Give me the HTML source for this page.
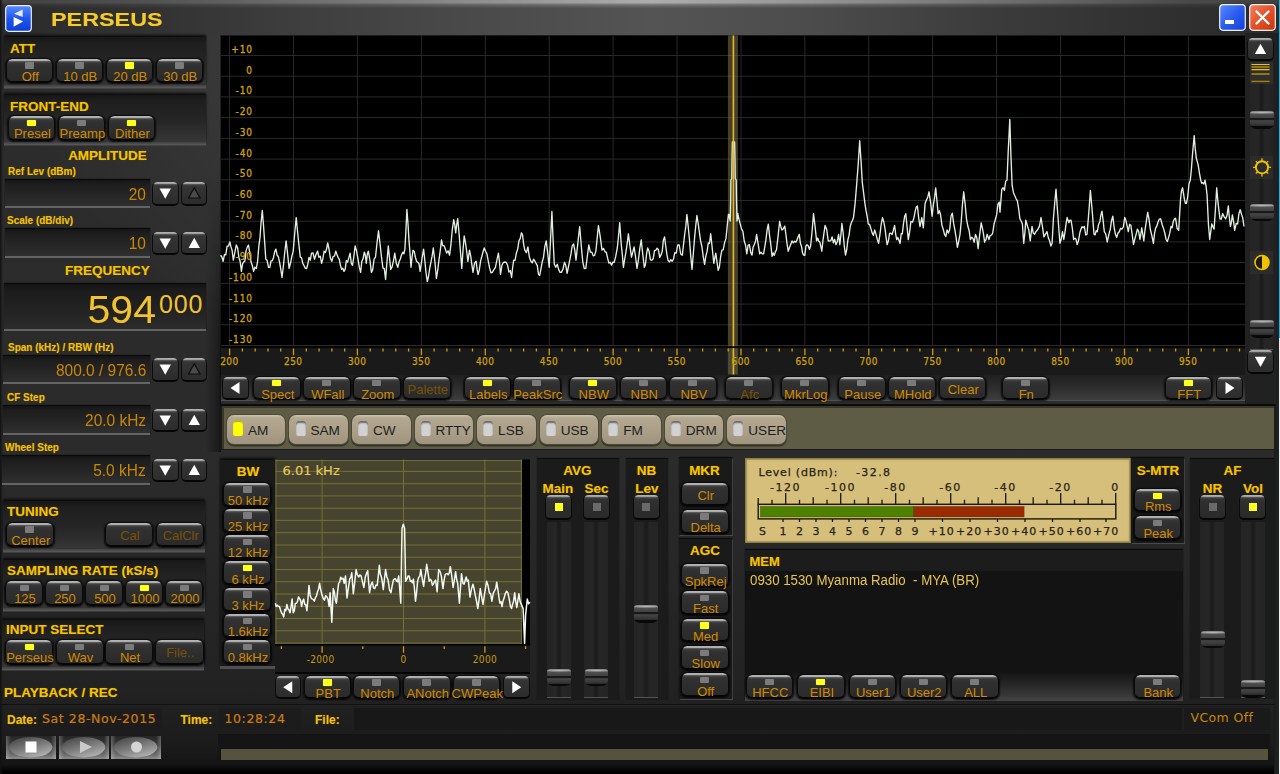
<!DOCTYPE html><html><head><meta charset="utf-8"><title>PERSEUS</title><style>
*{box-sizing:border-box;margin:0;padding:0}
html,body{width:1280px;height:774px;overflow:hidden;background:#1d1d1d}
body{position:relative;font-family:"Liberation Sans",sans-serif;color:#d08a00}
div,span,svg{position:absolute}
.win{left:0;top:0;width:1280px;height:774px;background:
 radial-gradient(ellipse 660px 430px at 655px 0,rgba(255,255,255,.2) 0,rgba(255,255,255,.09) 50%,rgba(255,255,255,.045) 75%,rgba(255,255,255,0) 100%),
 linear-gradient(180deg,#2c2c2c 0,#2b2b2b 450px,#222 690px,#1c1c1c 740px,#151515 764px,#000 772px)}
.tb{left:0;top:0;width:1280px;height:35px;background:linear-gradient(90deg,#2b2b2b 0,#313131 11%,#3e3e3e 23%,#4a4a4a 37%,#545454 51%,#4c4c4c 63%,#3b3b3b 78%,#2f2f2f 92%,#2a2a2a 100%)}
.tb2{left:0;top:0;width:1280px;height:9px;background:linear-gradient(90deg,rgba(255,255,255,.1) 0,rgba(255,255,255,.16) 12%,rgba(255,255,255,.3) 30%,rgba(255,255,255,.52) 51%,rgba(255,255,255,.3) 75%,rgba(255,255,255,.14) 92%,rgba(255,255,255,.1) 100%);-webkit-mask-image:linear-gradient(180deg,#000 0,#000 2.5px,rgba(0,0,0,.35) 5px,transparent 8.5px);mask-image:linear-gradient(180deg,#000 0,#000 2.5px,rgba(0,0,0,.35) 5px,transparent 8.5px)}
.pn{background:linear-gradient(180deg,#171717 0,#1e1e1e 6px,#272727 60%,#363636 100%);box-shadow:0 -2px 2px #0c0c0c,0 1.5px 0 #454545,0 3.5px 0 #555}
.pd{background:#1b1b1b;box-shadow:0 -1px 1px #0e0e0e}
.h{font-weight:bold;font-size:13.5px;color:#f5c400;white-space:nowrap;line-height:14px;text-shadow:0 0 1px #7a5a00}
.s{font-weight:bold;font-size:10px;color:#f2c20a;white-space:nowrap;line-height:12px;text-shadow:0 0 1px #7a5a00}
.b{height:24px;border-radius:6px;background:linear-gradient(180deg,#8a8a8a 0,#cdcdcd .8px,#a8a8a8 1.6px,#505050 2.6px,#363636 4px,#303030 7px,#2e2e2e 60%,#2a2a2a 100%);border:1px solid #0a0a0a;border-top:0;border-bottom:2.5px solid #060606;box-shadow:0 0 1.5px .6px rgba(0,0,0,.75);text-align:center;font-size:13px;line-height:13px;color:#d08a00;white-space:nowrap}
.b i{position:absolute;left:50%;margin-left:-4.5px;top:3.5px;width:9px;height:6.5px;background:#7b7b7b;border-radius:1px}
.b i.on{background:#ffff1e;box-shadow:0 0 1px #aa0}
.b span{left:-5px;right:-7px;top:11.2px;text-align:center}
.b.nl span{top:6px}
.b.dim{color:#7a5206}
.b.tbb i{top:2.6px}
.b.tbb span{top:10.9px}
.b.tbb.nl span{top:5.5px}
.ar{height:24px;border-radius:5px;background:linear-gradient(180deg,#8a8a8a 0,#c4c4c4 .8px,#9a9a9a 1.6px,#4a4a4a 2.6px,#353535 4px,#2c2c2c 100%);border:1px solid #0a0a0a;border-top:0;border-bottom:2.5px solid #060606}
.vb{background:linear-gradient(180deg,#141414 0,#1d1d1d 4px,#262626 60%,#2f2f2f 100%);box-shadow:0 -1px 1px #0a0a0a;border-bottom:2px solid #646464;font-size:17px;line-height:30.6px;color:#c8860a;white-space:nowrap}
.vb span{right:4px;top:0;transform-origin:100% 50%;transform:scaleX(.91)}
.tk{background:linear-gradient(90deg,#242424 0,#262626 36%,#1c1c1c 47%,#1c1c1c 53%,#262626 64%,#242424 100%);box-shadow:0 1px 0 #555}
.hd{height:17.5px;border-radius:3px 3px 6px 6px;background:radial-gradient(ellipse 60% 2px at 50% 1.6px,rgba(255,255,255,.35),rgba(255,255,255,0)),linear-gradient(180deg,#707070 0,#929292 1.6px,#505050 2.8px,#424242 6.5px,#191919 7.2px,#191919 9px,#464646 9.6px,#323232 14.3px,#090909 15.5px,#090909 17.5px)}
.tg{width:27px;height:24.5px;border-radius:5px;background:linear-gradient(180deg,#8a8a8a 0,#c4c4c4 .8px,#9a9a9a 1.6px,#4a4a4a 2.6px,#343434 4px,#2f2f2f 7px,#2a2a2a 100%);border:1px solid #0a0a0a;border-top:0;border-bottom:2.5px solid #060606}
.tg i{position:absolute;left:8.5px;top:8px;width:8px;height:8px;background:#6a6a6a}
.tg i.on{background:#ffff1e}
.mb{width:58.6px;height:28.6px;border-radius:7px;background:linear-gradient(180deg,#cdc3ad 0,#b3a78f 3px,#aa9e87 60%,#9f947f 100%);box-shadow:0 0 0 1px #4b4937,0 1.5px 0 1px #37352a;color:#1e1e1e;font-size:13.6px;line-height:14px}
.mb i{position:absolute;left:6.2px;top:6.2px;width:10px;height:14.6px;border-radius:3px 3px 2px 2px;background:#d2d2d2;box-shadow:inset 0 2px 1.5px #6a6a6a}
.mb i.on{background:#ffff00;box-shadow:inset 0 1px 1px #b4a800}
.mb span{left:21px;top:8.6px;white-space:nowrap}
.vd{font-family:"DejaVu Sans","Liberation Sans",sans-serif}
</style></head><body><div class="win"><div class="tb"></div><div class="tb2"></div>
<svg style="left:5px;top:5px" width="27" height="27" viewBox="0 0 27 27"><defs><linearGradient id="lg1" x1="0" y1="0" x2="0" y2="1"><stop offset="0" stop-color="#5a8cff"/><stop offset=".5" stop-color="#1f55ee"/><stop offset="1" stop-color="#0d3fd6"/></linearGradient></defs><rect x=".7" y=".7" width="25.6" height="25.6" rx="3" fill="url(#lg1)" stroke="#e8eefc" stroke-width="1.2"/><polygon points="17.7,4.6 17.7,12 9,8.7" fill="#e4ecff"/><polygon points="8.6,12 8.6,21.8 18.1,16.5" fill="#fff"/></svg>
<div style="left:51px;top:10.3px;font-weight:bold;font-size:17.5px;line-height:20px;color:#f4cb30;transform-origin:0 50%;transform:scaleX(1.335);white-space:nowrap;text-shadow:0 0 1px #6a5000">PERSEUS</div>
<svg style="left:1219px;top:4px" width="27" height="27" viewBox="0 0 27 27"><defs><linearGradient id="lg2" x1="0" y1="0" x2="1" y2="1"><stop offset="0" stop-color="#5b8bff"/><stop offset=".5" stop-color="#2a5cf0"/><stop offset="1" stop-color="#1240d8"/></linearGradient></defs><rect x=".7" y=".7" width="25.6" height="25.6" rx="3.5" fill="url(#lg2)" stroke="#f0f4ff" stroke-width="1.2"/><rect x="6" y="16" width="9" height="4" fill="#fff"/></svg>
<svg style="left:1248.6px;top:4px" width="27" height="27" viewBox="0 0 27 27"><defs><linearGradient id="lg3" x1="0" y1="0" x2="1" y2="1"><stop offset="0" stop-color="#f08060"/><stop offset=".5" stop-color="#e2522a"/><stop offset="1" stop-color="#c8340c"/></linearGradient></defs><rect x=".7" y=".7" width="25.6" height="25.6" rx="3.5" fill="url(#lg3)" stroke="#f8f0f0" stroke-width="1.2"/><path d="M7.5 7.5 L19.5 19.5 M19.5 7.5 L7.5 19.5" stroke="#fff" stroke-width="2.4" stroke-linecap="round"/></svg>
<div style="left:1279px;top:0;width:1px;height:338px;background:#19b4e6"></div><div style="left:1279px;top:338px;width:1px;height:436px;background:#e6eef0"></div>
<div style="left:1274.3px;top:33px;width:4.7px;height:741px;background:linear-gradient(90deg,#1b1b1b,#222)"></div>
<div style="left:0;top:0;width:3px;height:774px;background:linear-gradient(90deg,#111,rgba(20,20,20,0))"></div>
<div class="pn" style="left:4px;top:37px;width:202px;height:48px"></div>
<div class="h" style="left:10px;top:41.5px;">ATT</div>
<div class="b" style="left:5.6px;top:58.5px;width:47.4px;height:24.5px"><i></i><span>Off</span></div>
<div class="b" style="left:55.6px;top:58.5px;width:47.4px;height:24.5px"><i></i><span>10 dB</span></div>
<div class="b" style="left:105.6px;top:58.5px;width:47.4px;height:24.5px"><i class="on"></i><span>20 dB</span></div>
<div class="b" style="left:155.6px;top:58.5px;width:47.4px;height:24.5px"><i></i><span>30 dB</span></div>
<div class="pn" style="left:4px;top:95px;width:202px;height:47px"></div>
<div class="h" style="left:10px;top:100px;">FRONT-END</div>
<div class="b" style="left:7.7px;top:116px;width:47.4px;height:24.5px"><i class="on"></i><span>Presel</span></div>
<div class="b" style="left:57.7px;top:116px;width:47.4px;height:24.5px"><i></i><span>Preamp</span></div>
<div class="b" style="left:107.7px;top:116px;width:47.4px;height:24.5px"><i class="on"></i><span>Dither</span></div>
<div class="h" style="left:7.5px;top:149px;width:200px;text-align:center;">AMPLITUDE</div>
<div class="s" style="left:8px;top:165.5px;">Ref Lev (dBm)</div>
<div class="vb" style="left:5px;top:179.5px;width:145px;height:28.5px"><span>20</span></div>
<div class="ar" style="left:152px;top:182.3px;width:26.5px;height:23.7px"><svg width="25.5" height="23.2" style="left:0;top:0"><polygon points="12.25,16.8 6.55,6.6 17.95,6.6" fill="#fff"/></svg></div>
<div class="ar" style="left:180.5px;top:182.3px;width:26.5px;height:23.7px"><svg width="25.5" height="23.2" style="left:0;top:0"><polygon points="12.25,5.8 6.55,16 17.95,16" fill="#4a4a4a" stroke="#0c0c0c" stroke-width="1.2"/></svg></div>
<div class="s" style="left:7px;top:215px;">Scale (dB/div)</div>
<div class="vb" style="left:5px;top:229px;width:145px;height:28.5px"><span>10</span></div>
<div class="ar" style="left:152px;top:231.8px;width:26.5px;height:23.7px"><svg width="25.5" height="23.2" style="left:0;top:0"><polygon points="12.25,16.8 6.55,6.6 17.95,6.6" fill="#fff"/></svg></div>
<div class="ar" style="left:180.5px;top:231.8px;width:26.5px;height:23.7px"><svg width="25.5" height="23.2" style="left:0;top:0"><polygon points="12.25,5.8 6.55,16 17.95,16" fill="#fff"/></svg></div>
<div class="h" style="left:7.5px;top:264px;width:200px;text-align:center;">FREQUENCY</div>
<div style="left:4px;top:284px;width:202px;height:47px;background:linear-gradient(180deg,#121212 0,#1b1b1b 5px,#232323 60%,#2c2c2c 100%);box-shadow:0 -1px 1px #0a0a0a;border-bottom:2px solid #646464"></div>
<div style="left:40px;top:287px;width:116px;text-align:right;font-size:39.5px;line-height:44px;color:#f2c230;white-space:nowrap;transform-origin:100% 50%;transform:scaleX(1.04)">594</div>
<div style="left:159px;top:290px;font-size:25px;line-height:28px;color:#f2c230;white-space:nowrap;letter-spacing:.9px">000</div>
<div class="s" style="left:8px;top:341.5px;">Span (kHz) / RBW (Hz)</div>
<div class="vb" style="left:3px;top:355.5px;width:147px;height:28.5px"><span>800.0 / 976.6</span></div>
<div class="ar" style="left:152px;top:358.3px;width:26.5px;height:23.7px"><svg width="25.5" height="23.2" style="left:0;top:0"><polygon points="12.25,16.8 6.55,6.6 17.95,6.6" fill="#fff"/></svg></div>
<div class="ar" style="left:180.5px;top:358.3px;width:26.5px;height:23.7px"><svg width="25.5" height="23.2" style="left:0;top:0"><polygon points="12.25,5.8 6.55,16 17.95,16" fill="#4a4a4a" stroke="#0c0c0c" stroke-width="1.2"/></svg></div>
<div class="s" style="left:7px;top:392px;">CF Step</div>
<div class="vb" style="left:3px;top:406px;width:147px;height:28.5px"><span>20.0 kHz</span></div>
<div class="ar" style="left:152px;top:408.8px;width:26.5px;height:23.7px"><svg width="25.5" height="23.2" style="left:0;top:0"><polygon points="12.25,16.8 6.55,6.6 17.95,6.6" fill="#fff"/></svg></div>
<div class="ar" style="left:180.5px;top:408.8px;width:26.5px;height:23.7px"><svg width="25.5" height="23.2" style="left:0;top:0"><polygon points="12.25,5.8 6.55,16 17.95,16" fill="#fff"/></svg></div>
<div class="s" style="left:5px;top:442px;">Wheel Step</div>
<div class="vb" style="left:2px;top:456px;width:148px;height:28.5px"><span>5.0 kHz</span></div>
<div class="ar" style="left:152px;top:458.8px;width:26.5px;height:23.7px"><svg width="25.5" height="23.2" style="left:0;top:0"><polygon points="12.25,16.8 6.55,6.6 17.95,6.6" fill="#fff"/></svg></div>
<div class="ar" style="left:180.5px;top:458.8px;width:26.5px;height:23.7px"><svg width="25.5" height="23.2" style="left:0;top:0"><polygon points="12.25,5.8 6.55,16 17.95,16" fill="#fff"/></svg></div>
<div class="pn" style="left:3px;top:501px;width:202px;height:48px"></div>
<div class="h" style="left:7px;top:505px;">TUNING</div>
<div class="b" style="left:6px;top:522.5px;width:47.5px;height:24.5px"><i></i><span>Center</span></div>
<div class="b nl dim" style="left:105px;top:522.5px;width:48px;height:24.5px"><span>Cal</span></div>
<div class="b nl dim" style="left:155.5px;top:522.5px;width:48.5px;height:24.5px"><span>CalClr</span></div>
<div class="pn" style="left:3px;top:560px;width:202px;height:48px"></div>
<div class="h" style="left:7px;top:564px;">SAMPLING RATE (kS/s)</div>
<div class="b" style="left:5px;top:581px;width:38px;height:24.5px"><i></i><span>125</span></div>
<div class="b" style="left:45px;top:581px;width:38px;height:24.5px"><i></i><span>250</span></div>
<div class="b" style="left:85px;top:581px;width:38px;height:24.5px"><i></i><span>500</span></div>
<div class="b" style="left:125px;top:581px;width:38px;height:24.5px"><i class="on"></i><span>1000</span></div>
<div class="b" style="left:165px;top:581px;width:38px;height:24.5px"><i></i><span>2000</span></div>
<div class="pn" style="left:2px;top:620px;width:202px;height:47px"></div>
<div class="h" style="left:6px;top:623px;">INPUT SELECT</div>
<div class="b" style="left:5px;top:640px;width:48px;height:24.5px"><i class="on"></i><span>Perseus</span></div>
<div class="b" style="left:55.5px;top:640px;width:48px;height:24.5px"><i></i><span>Wav</span></div>
<div class="b" style="left:105px;top:640px;width:48px;height:24.5px"><i></i><span>Net</span></div>
<div class="b nl dim" style="left:155px;top:640px;width:48.5px;height:24.5px"><span>File..</span></div>
<div class="h" style="left:4px;top:686px;">PLAYBACK / REC</div>
<div style="left:0;top:704px;width:1275px;height:1px;background:#111"></div>
<div class="s" style="left:7px;top:713.5px;font-size:12px">Date:</div>
<div style="left:38px;top:708px;width:124px;height:22px;background:#1c1c1c"></div>
<div class="vd" style="left:42px;top:712px;font-size:12.5px;line-height:14px;color:#cc7c16;-webkit-text-stroke:.2px #cc7c16;letter-spacing:.6px;white-space:nowrap">Sat 28-Nov-2015</div>
<div class="s" style="left:180.5px;top:713.5px;font-size:12px">Time:</div>
<div style="left:219px;top:708px;width:82px;height:22px;background:#1c1c1c"></div>
<div class="vd" style="left:224.5px;top:712px;font-size:12.5px;line-height:14px;color:#cc7c16;-webkit-text-stroke:.2px #cc7c16;letter-spacing:.6px;white-space:nowrap">10:28:24</div>
<div class="s" style="left:315px;top:713.5px;font-size:12px">File:</div>
<div style="left:354px;top:708px;width:827.5px;height:22px;background:#181818"></div>
<div style="left:1183.5px;top:708px;width:86px;height:22px;background:#1a1a1a"></div>
<div class="vd" style="left:1190.5px;top:711.4px;font-size:12.5px;line-height:14px;color:#c8860a;letter-spacing:.37px;white-space:nowrap">VCom Off</div>
<div style="left:218px;top:734px;width:1052px;height:31px;background:#151515"></div>
<div style="left:220.5px;top:748.5px;width:1047.5px;height:11px;background:#55533d;box-shadow:-1px 0 0 #111"></div>
<div style="left:6px;top:736px;width:50px;height:23px;background:linear-gradient(90deg,rgba(255,255,255,.25) 0,rgba(255,255,255,0) 10%,rgba(255,255,255,0) 90%,rgba(255,255,255,.25) 100%),linear-gradient(180deg,#262626 0,#363636 35%,#6a6a6a 80%,#8c8c8c 100%)"></div>
<svg style="left:6px;top:736px" width="50" height="23"><defs><linearGradient id="tg6" x1="0.2" y1="0" x2=".8" y2="1"><stop offset="0" stop-color="#474747"/><stop offset=".5" stop-color="#7c7c7c"/><stop offset="1" stop-color="#b8b8b8"/></linearGradient></defs><ellipse cx="24.7" cy="11.2" rx="21.6" ry="10.2" fill="url(#tg6)"/><rect x="19.5" y="5.5" width="11" height="11" fill="#fff"/></svg>
<div style="left:59px;top:736px;width:50px;height:23px;background:linear-gradient(90deg,rgba(255,255,255,.25) 0,rgba(255,255,255,0) 10%,rgba(255,255,255,0) 90%,rgba(255,255,255,.25) 100%),linear-gradient(180deg,#262626 0,#363636 35%,#6a6a6a 80%,#8c8c8c 100%)"></div>
<svg style="left:59px;top:736px" width="50" height="23"><defs><linearGradient id="tg59" x1="0.2" y1="0" x2=".8" y2="1"><stop offset="0" stop-color="#474747"/><stop offset=".5" stop-color="#7c7c7c"/><stop offset="1" stop-color="#b8b8b8"/></linearGradient></defs><ellipse cx="24.7" cy="11.2" rx="21.6" ry="10.2" fill="url(#tg59)"/><polygon points="21,5 21,17 33,11" fill="#c9c9c9"/></svg>
<div style="left:111px;top:736px;width:50px;height:23px;background:linear-gradient(90deg,rgba(255,255,255,.25) 0,rgba(255,255,255,0) 10%,rgba(255,255,255,0) 90%,rgba(255,255,255,.25) 100%),linear-gradient(180deg,#262626 0,#363636 35%,#6a6a6a 80%,#8c8c8c 100%)"></div>
<svg style="left:111px;top:736px" width="50" height="23"><defs><linearGradient id="tg111" x1="0.2" y1="0" x2=".8" y2="1"><stop offset="0" stop-color="#474747"/><stop offset=".5" stop-color="#7c7c7c"/><stop offset="1" stop-color="#b8b8b8"/></linearGradient></defs><ellipse cx="24.7" cy="11.2" rx="21.6" ry="10.2" fill="url(#tg111)"/><circle cx="25.5" cy="11" r="5.5" fill="#d4d4d4"/></svg>
<div style="left:219.5px;top:34.7px;width:1056.5px;height:342px;background:#222;"></div>
<div style="left:206px;top:33px;width:15px;height:419px;background:linear-gradient(90deg,rgba(0,0,0,0),rgba(0,0,0,.38) 85%,rgba(0,0,0,.6) 100%);-webkit-mask-image:linear-gradient(180deg,transparent 0,transparent 140px,#000 330px);mask-image:linear-gradient(180deg,transparent 0,transparent 140px,#000 330px)"></div>
<div style="left:221px;top:346px;width:1024px;height:30px;background:#1a1a1a"></div>
<svg style="left:0;top:0" width="1280" height="380" viewBox="0 0 1280 380" font-family="DejaVu Sans Condensed,DejaVu Sans,Liberation Sans,sans-serif"><rect x="221" y="35.8" width="1024" height="310.4" fill="#000"/><path d="M221 55.5H1245M221 76.2H1245M221 96.9H1245M221 117.6H1245M221 138.4H1245M221 159.1H1245M221 179.8H1245M221 200.5H1245M221 221.2H1245M221 241.9H1245M221 262.6H1245M221 283.4H1245M221 304.1H1245M221 324.8H1245M221 345.5H1245M229.6 35.5V346M293.5 35.5V346M357.4 35.5V346M421.4 35.5V346M485.3 35.5V346M549.2 35.5V346M613.1 35.5V346M677.0 35.5V346M741.0 35.5V346M804.9 35.5V346M868.8 35.5V346M932.7 35.5V346M996.6 35.5V346M1060.6 35.5V346M1124.5 35.5V346M1188.4 35.5V346" stroke="#292929" stroke-width="1" fill="none"/><rect x="727.9" y="35.5" width="10" height="339" fill="#6e6a42" opacity=".6"/><polyline points="220.5,255.2 221.8,256.7 223.1,261.3 224.5,254.5 225.8,254.8 227.1,246.1 228.5,246.1 229.8,242.0 231.0,246.9 232.1,250.4 233.3,260.2 234.8,252.7 236.3,245.0 237.6,247.7 238.9,257.6 240.1,261.2 241.4,271.4 242.6,263.6 243.8,262.0 244.9,260.9 246.1,250.6 247.3,247.1 248.5,245.0 249.8,252.7 251.0,262.0 252.3,265.5 253.6,271.4 254.9,267.2 256.3,268.6 257.6,261.3 258.8,246.7 260.0,237.3 261.1,222.3 262.3,210.5 263.5,225.3 264.6,241.4 265.8,259.2 267.1,260.3 268.5,267.3 269.8,267.3 271.0,261.0 272.3,260.7 273.5,257.5 274.7,251.6 275.9,249.1 277.1,255.2 278.4,256.8 279.6,262.4 280.8,269.3 282.0,277.5 283.4,266.0 284.7,252.8 286.1,240.9 287.6,253.9 289.1,268.4 290.5,263.3 291.8,256.5 293.2,251.1 294.7,233.5 296.2,217.6 297.6,232.0 298.9,244.8 300.3,257.2 301.6,257.8 302.8,263.4 304.1,265.8 305.4,268.4 306.6,268.5 307.8,264.2 309.0,257.4 310.3,260.2 311.5,253.1 313.0,253.0 314.5,259.2 316.0,254.5 317.6,251.1 318.9,257.3 320.3,256.3 321.6,263.3 322.8,259.1 324.1,251.3 325.3,252.5 326.5,249.3 327.7,243.0 329.1,249.7 330.4,258.3 331.8,261.3 333.1,256.3 334.5,256.1 335.8,251.1 337.0,254.8 338.2,257.6 339.3,259.4 340.5,265.6 341.6,269.3 342.8,268.3 344.0,271.4 345.2,269.1 346.4,260.4 347.6,262.1 348.8,258.0 350.1,253.1 351.3,263.4 352.5,265.3 353.8,257.0 355.1,246.0 356.5,250.8 357.9,258.3 359.3,267.2 360.6,272.4 361.8,261.6 363.1,258.6 364.3,252.1 365.3,254.9 366.3,263.3 367.3,254.0 368.3,251.1 369.9,260.0 371.4,272.4 372.7,269.6 374.1,259.2 375.5,257.2 377.0,243.0 378.5,230.8 380.0,243.5 381.5,257.2 382.9,267.8 384.3,268.6 385.6,279.5 386.9,262.6 388.3,246.0 389.5,257.9 390.7,269.4 392.0,267.2 393.4,261.2 394.8,253.1 396.3,263.3 397.8,267.3 399.1,261.7 400.3,259.0 401.6,254.7 402.9,252.1 403.9,253.8 404.9,249.1 405.9,231.1 406.9,209.5 408.0,223.8 409.0,240.9 410.0,252.8 411.0,267.3 412.0,257.6 413.0,250.1 414.2,251.4 415.4,257.1 416.6,261.5 417.8,262.3 419.0,263.7 420.1,271.4 421.3,263.6 422.4,256.0 423.6,249.1 424.8,260.2 426.0,272.5 427.3,281.6 428.5,276.5 429.7,268.3 430.9,262.4 432.1,256.2 433.3,248.0 434.9,261.5 436.4,278.5 437.7,270.5 438.9,260.3 440.2,251.1 441.5,239.9 442.7,245.7 444.0,245.6 445.3,249.0 446.6,253.1 448.1,250.8 449.6,255.2 451.0,243.8 452.3,229.7 453.7,219.6 454.7,224.5 455.7,232.8 456.7,224.5 457.7,218.6 459.1,233.8 460.4,251.1 461.8,268.4 463.0,250.3 464.2,235.9 465.4,242.3 466.7,251.4 467.9,261.3 469.5,250.1 470.7,255.9 471.8,264.4 473.0,272.4 473.0,272.4 474.6,262.9 476.1,261.3 477.1,269.4 478.1,274.5 479.3,270.1 480.6,260.9 481.8,256.5 483.0,252.0 484.2,248.0 485.6,251.3 486.9,253.7 488.3,261.3 489.6,267.9 491.0,272.8 492.3,272.4 493.9,269.6 495.4,267.3 496.9,260.1 498.4,253.1 499.5,262.1 500.5,274.5 502.0,265.0 503.5,262.3 504.9,262.0 506.2,262.3 507.6,265.3 508.9,272.1 510.3,270.6 511.6,277.5 512.7,267.0 513.7,260.2 515.0,260.3 516.4,253.0 517.7,249.1 519.0,240.7 520.2,238.6 521.4,232.8 522.5,234.6 523.7,244.6 524.8,250.1 526.4,252.6 527.9,247.0 529.4,257.2 530.9,261.3 532.3,262.9 533.6,259.2 535.0,261.3 536.2,263.7 537.3,265.6 538.5,274.2 539.7,275.5 540.9,269.1 542.1,262.3 543.5,257.5 544.8,246.6 546.2,240.9 547.7,253.0 549.2,267.3 550.5,240.7 551.9,211.5 553.1,239.8 554.3,264.3 555.8,267.3 557.3,264.3 558.7,269.6 560.1,272.4 561.4,272.4 562.9,269.4 564.5,262.3 565.8,265.6 567.1,273.4 568.3,267.5 569.5,261.3 570.9,254.3 572.2,245.8 573.6,244.0 574.8,250.2 576.0,260.2 577.3,248.2 578.5,236.9 579.7,226.7 581.2,244.8 582.7,261.3 584.3,268.6 585.8,268.4 587.3,256.5 588.8,245.0 590.4,252.2 591.9,252.1 593.2,255.9 594.6,255.3 595.9,251.1 597.2,237.9 598.4,225.7 599.6,232.7 600.8,240.9 602.0,250.1 603.6,248.5 605.1,252.1 606.3,252.2 607.6,258.2 608.9,263.1 610.2,262.3 611.5,265.1 612.9,262.1 614.2,262.3 615.7,256.4 617.3,248.0 618.5,236.6 619.7,222.7 621.3,245.0 622.3,254.5 623.4,267.3 624.6,259.6 625.9,252.2 627.2,243.3 628.4,233.8 630.0,246.5 631.5,257.2 632.8,251.9 634.1,247.0 635.5,256.4 637.0,268.4 638.4,260.0 639.8,248.7 641.2,239.9 642.8,254.8 644.3,267.3 645.4,264.9 646.6,253.6 647.7,248.0 649.1,251.3 650.4,259.9 651.8,260.2 653.2,258.7 654.5,250.7 655.9,250.1 657.1,248.2 658.4,249.7 659.7,257.3 660.9,255.2 662.2,251.6 663.4,240.0 664.6,236.9 665.7,246.0 666.9,254.4 668.0,260.2 669.4,261.9 670.8,259.7 672.1,261.3 673.5,259.0 674.8,252.7 676.2,253.1 677.7,245.0 679.2,245.0 680.7,254.0 682.3,255.2 683.4,245.6 684.6,235.0 685.8,226.4 686.9,214.5 688.2,226.5 689.4,238.9 690.7,255.6 692.0,269.4 693.2,255.4 694.5,238.9 695.7,226.1 696.9,215.5 698.1,223.0 699.3,231.6 700.6,240.9 701.9,246.5 703.3,257.2 704.6,264.3 705.8,256.2 707.1,251.4 708.3,242.9 709.5,243.4 710.7,233.8 712.2,248.0 713.8,263.3 714.8,257.9 715.8,253.1 717.0,262.1 718.2,270.4 719.4,267.0 720.7,256.2 721.9,250.1 723.2,249.9 724.6,242.6 725.9,238.9 728.4,214.5 729.0,214.5 730.2,221.0 730.7,200.0 730.9,180.0 731.8,178.5 732.0,160.0 732.4,142.0 734.6,142.0 735.0,160.0 735.2,178.5 736.2,180.0 736.5,200.0 737.0,221.0 738.0,214.0 737.8,213.7 739.0,219.2 740.3,224.3 741.6,229.2 742.9,231.3 744.2,241.0 745.5,245.0 746.8,253.8 748.1,245.1 749.4,244.7 750.7,252.4 752.0,255.1 753.1,247.2 754.3,244.5 755.5,241.5 756.6,234.4 758.2,244.3 759.7,253.8 761.0,252.3 762.3,253.9 763.6,253.8 764.8,246.6 765.9,240.1 767.1,229.9 768.3,224.1 769.5,235.1 770.8,244.6 772.1,256.4 773.2,252.9 774.3,255.4 775.4,251.6 776.5,249.9 778.1,235.9 779.6,221.5 780.7,226.2 781.9,230.1 783.0,229.2 784.8,226.1 785.9,234.3 787.0,243.3 788.2,251.2 789.4,247.8 790.7,244.4 792.0,240.9 793.3,242.9 794.6,241.3 795.9,242.2 797.0,239.9 798.1,236.8 799.3,234.4 800.4,243.3 801.5,246.4 802.6,253.1 803.7,255.1 804.8,255.3 805.9,246.2 807.0,244.7 808.2,245.7 809.4,249.3 810.6,246.0 812.1,231.2 813.5,213.7 815.0,225.8 816.6,240.9 817.7,238.1 818.8,241.2 819.9,242.2 821.8,251.2 822.9,240.9 824.0,232.9 825.1,225.4 826.7,229.5 828.2,240.9 829.5,241.0 830.8,240.7 832.1,237.0 833.4,242.9 834.7,239.3 836.0,244.7 837.3,241.4 838.6,234.4 839.8,244.7 840.9,234.8 841.9,223.5 843.1,232.6 844.3,246.1 845.5,255.1 846.7,249.8 847.9,239.7 849.0,235.6 850.2,226.6 851.3,222.8 852.4,220.5 853.5,217.6 855.1,203.4 856.6,185.3 858.2,164.4 859.7,140.8 861.0,160.4 862.3,182.7 863.6,192.8 864.9,203.4 866.0,210.3 867.2,216.5 868.3,224.1 869.6,224.5 870.9,228.6 872.2,233.1 873.4,235.4 874.7,229.9 876.0,234.4 877.3,239.4 878.6,243.4 879.9,234.6 881.2,224.3 882.5,217.6 883.8,222.0 885.1,229.2 886.1,237.5 887.1,244.7 888.4,241.0 889.6,233.3 890.8,233.1 892.1,234.6 893.3,230.4 894.6,225.4 895.7,234.3 896.7,239.6 897.8,237.5 898.9,240.2 900.1,243.4 901.2,233.6 902.3,233.9 903.5,223.7 904.6,216.6 905.8,213.7 907.0,226.3 908.3,239.6 909.6,232.2 910.9,221.5 912.5,222.2 914.0,217.6 915.1,211.7 916.3,206.9 917.4,206.0 918.7,218.0 920.0,226.6 921.8,217.6 923.3,227.9 925.1,203.4 926.4,200.1 927.7,197.3 929.0,191.8 930.6,202.4 932.1,216.3 933.3,205.1 934.5,198.1 935.7,187.9 936.9,200.5 938.1,213.7 939.4,210.8 940.6,215.0 941.9,225.2 943.2,229.1 944.5,234.4 945.8,236.5 947.1,230.0 948.4,233.1 949.7,229.5 951.0,216.2 952.3,213.2 953.6,223.2 954.9,230.1 956.2,238.2 957.4,247.3 958.7,241.3 960.0,234.4 961.2,221.9 962.4,205.0 963.7,191.8 965.1,203.8 966.5,218.9 967.8,226.0 969.1,230.5 970.4,239.6 971.7,237.2 973.0,238.5 974.2,242.2 975.5,234.4 976.8,237.7 978.1,248.6 979.7,234.5 981.2,222.8 982.3,227.7 983.5,234.1 984.6,242.2 985.0,240.8 986.0,239.7 987.1,234.3 988.9,239.5 990.2,235.5 991.5,235.2 992.7,233.0 994.0,224.3 995.3,219.7 996.6,214.9 997.9,204.4 999.2,202.0 1000.0,212.3 1001.8,189.1 1003.1,187.7 1004.4,190.4 1005.7,181.2 1007.0,180.1 1008.2,151.7 1009.8,119.4 1010.8,151.7 1012.1,185.2 1013.4,192.4 1014.7,195.6 1016.0,198.6 1017.3,200.7 1018.6,208.5 1019.9,218.8 1021.2,221.2 1022.4,224.0 1023.7,243.3 1024.8,233.5 1025.8,220.1 1027.6,226.5 1028.9,230.3 1030.2,240.8 1032.0,226.5 1033.3,233.1 1034.6,234.3 1035.7,232.0 1036.8,230.8 1037.9,229.1 1039.5,226.1 1041.0,217.5 1042.5,226.8 1043.9,236.9 1045.4,234.4 1047.0,231.7 1048.3,237.8 1049.6,240.8 1050.9,246.1 1052.1,243.3 1053.4,218.8 1054.7,203.3 1056.0,189.1 1057.1,205.3 1058.1,218.8 1059.9,243.3 1061.2,239.3 1062.5,231.7 1063.8,239.5 1064.9,232.7 1066.0,224.4 1067.1,217.5 1068.9,222.7 1070.0,220.1 1071.0,220.1 1072.3,228.0 1073.6,239.5 1074.8,238.1 1076.0,239.3 1077.2,244.6 1078.5,240.8 1079.8,233.0 1080.9,229.2 1082.0,226.7 1083.1,227.8 1084.4,226.5 1085.7,235.0 1087.0,234.3 1088.3,218.8 1089.3,206.1 1090.4,190.4 1092.2,211.1 1094.0,234.3 1095.1,234.9 1096.2,230.7 1097.3,231.7 1098.6,224.4 1099.9,221.4 1101.0,214.5 1102.0,211.1 1103.2,221.2 1104.3,231.7 1105.7,234.0 1107.2,242.0 1108.7,235.1 1110.3,229.1 1111.5,220.7 1112.8,216.2 1114.1,227.1 1115.4,234.3 1116.7,237.4 1118.0,233.0 1119.3,231.7 1120.6,228.3 1121.9,229.1 1123.3,227.2 1124.7,217.5 1125.9,220.6 1127.1,225.8 1128.3,231.7 1129.6,224.3 1130.9,225.3 1132.2,234.5 1133.5,244.6 1134.8,239.2 1136.1,234.3 1137.4,229.1 1138.7,231.8 1140.0,239.5 1141.8,227.8 1142.8,234.3 1143.8,240.8 1145.1,229.3 1146.4,220.9 1147.7,212.3 1149.0,219.1 1150.3,229.1 1151.8,235.4 1153.4,243.3 1154.5,233.9 1155.6,228.1 1156.7,226.5 1158.0,222.3 1159.3,219.1 1160.6,218.8 1162.2,224.7 1163.7,229.1 1164.9,233.5 1166.1,239.5 1167.3,241.5 1168.5,237.9 1169.7,233.4 1171.0,226.5 1172.1,227.7 1173.3,221.5 1174.4,218.9 1175.6,218.3 1177.1,228.4 1178.7,230.4 1180.5,199.4 1181.5,190.7 1182.6,187.8 1184.4,199.4 1185.4,203.3 1186.4,203.3 1187.7,196.8 1189.0,184.0 1190.3,180.1 1191.4,169.1 1192.4,155.5 1194.2,135.6 1195.2,148.4 1196.3,158.1 1198.1,164.6 1199.4,172.8 1200.7,180.1 1201.7,183.3 1202.7,182.6 1203.9,184.0 1205.0,180.1 1206.1,186.4 1207.1,195.6 1208.4,224.0 1209.7,239.5 1210.7,231.8 1211.8,224.0 1212.9,226.6 1214.1,229.1 1215.4,209.8 1216.7,187.8 1217.7,199.4 1218.7,208.5 1220.0,218.8 1221.3,219.0 1222.6,213.6 1224.2,216.9 1225.7,218.8 1227.0,215.6 1228.3,205.9 1229.3,217.0 1230.4,226.5 1231.4,222.4 1232.4,214.9 1233.6,221.6 1234.7,230.4 1236.2,223.3 1237.6,224.0 1238.9,213.8 1240.2,209.8 1241.5,214.2 1242.7,217.6 1244.0,226.5" fill="none" stroke="#e2f0e2" stroke-width="1.35" stroke-linejoin="round"/><rect x="732.6" y="35.5" width="1.6" height="339" fill="#f0b428"/><rect x="221" y="346.2" width="1024" height="1.9" fill="#050505"/><text x="252.8" y="52.9" text-anchor="end" font-size="10" fill="#cda010" stroke="#cda010" stroke-width=".3" letter-spacing=".85">+10</text><text x="252.8" y="73.6" text-anchor="end" font-size="10" fill="#cda010" stroke="#cda010" stroke-width=".3" letter-spacing=".85">0</text><text x="252.8" y="94.3" text-anchor="end" font-size="10" fill="#cda010" stroke="#cda010" stroke-width=".3" letter-spacing=".85">-10</text><text x="252.8" y="115.0" text-anchor="end" font-size="10" fill="#cda010" stroke="#cda010" stroke-width=".3" letter-spacing=".85">-20</text><text x="252.8" y="135.8" text-anchor="end" font-size="10" fill="#cda010" stroke="#cda010" stroke-width=".3" letter-spacing=".85">-30</text><text x="252.8" y="156.5" text-anchor="end" font-size="10" fill="#cda010" stroke="#cda010" stroke-width=".3" letter-spacing=".85">-40</text><text x="252.8" y="177.2" text-anchor="end" font-size="10" fill="#cda010" stroke="#cda010" stroke-width=".3" letter-spacing=".85">-50</text><text x="252.8" y="197.9" text-anchor="end" font-size="10" fill="#cda010" stroke="#cda010" stroke-width=".3" letter-spacing=".85">-60</text><text x="252.8" y="218.6" text-anchor="end" font-size="10" fill="#cda010" stroke="#cda010" stroke-width=".3" letter-spacing=".85">-70</text><text x="252.8" y="239.3" text-anchor="end" font-size="10" fill="#cda010" stroke="#cda010" stroke-width=".3" letter-spacing=".85">-80</text><text x="252.8" y="260.0" text-anchor="end" font-size="10" fill="#cda010" stroke="#cda010" stroke-width=".3" letter-spacing=".85">-90</text><text x="252.8" y="280.8" text-anchor="end" font-size="10" fill="#cda010" stroke="#cda010" stroke-width=".3" letter-spacing=".85">-100</text><text x="252.8" y="301.5" text-anchor="end" font-size="10" fill="#cda010" stroke="#cda010" stroke-width=".3" letter-spacing=".85">-110</text><text x="252.8" y="322.2" text-anchor="end" font-size="10" fill="#cda010" stroke="#cda010" stroke-width=".3" letter-spacing=".85">-120</text><text x="252.8" y="342.9" text-anchor="end" font-size="10" fill="#cda010" stroke="#cda010" stroke-width=".3" letter-spacing=".85">-130</text><path d="M229.6 348.5V355.2M242.4 348.5V351.6M255.2 348.5V351.6M268.0 348.5V351.6M280.7 348.5V351.6M293.5 348.5V355.2M306.3 348.5V351.6M319.1 348.5V351.6M331.9 348.5V351.6M344.7 348.5V351.6M357.4 348.5V355.2M370.2 348.5V351.6M383.0 348.5V351.6M395.8 348.5V351.6M408.6 348.5V351.6M421.4 348.5V355.2M434.1 348.5V351.6M446.9 348.5V351.6M459.7 348.5V351.6M472.5 348.5V351.6M485.3 348.5V355.2M498.1 348.5V351.6M510.8 348.5V351.6M523.6 348.5V351.6M536.4 348.5V351.6M549.2 348.5V355.2M562.0 348.5V351.6M574.8 348.5V351.6M587.6 348.5V351.6M600.3 348.5V351.6M613.1 348.5V355.2M625.9 348.5V351.6M638.7 348.5V351.6M651.5 348.5V351.6M664.3 348.5V351.6M677.0 348.5V355.2M689.8 348.5V351.6M702.6 348.5V351.6M715.4 348.5V351.6M728.2 348.5V351.6M741.0 348.5V355.2M753.7 348.5V351.6M766.5 348.5V351.6M779.3 348.5V351.6M792.1 348.5V351.6M804.9 348.5V355.2M817.7 348.5V351.6M830.4 348.5V351.6M843.2 348.5V351.6M856.0 348.5V351.6M868.8 348.5V355.2M881.6 348.5V351.6M894.4 348.5V351.6M907.2 348.5V351.6M919.9 348.5V351.6M932.7 348.5V355.2M945.5 348.5V351.6M958.3 348.5V351.6M971.1 348.5V351.6M983.9 348.5V351.6M996.6 348.5V355.2M1009.4 348.5V351.6M1022.2 348.5V351.6M1035.0 348.5V351.6M1047.8 348.5V351.6M1060.6 348.5V355.2M1073.3 348.5V351.6M1086.1 348.5V351.6M1098.9 348.5V351.6M1111.7 348.5V351.6M1124.5 348.5V355.2M1137.3 348.5V351.6M1150.0 348.5V351.6M1162.8 348.5V351.6M1175.6 348.5V351.6M1188.4 348.5V355.2M1201.2 348.5V351.6M1214.0 348.5V351.6M1226.8 348.5V351.6M1239.5 348.5V351.6" stroke="#d29a14" stroke-width="1.3" fill="none"/><text x="229.4" y="365.3" text-anchor="middle" font-size="10" fill="#cda010" stroke="#cda010" stroke-width=".25" letter-spacing=".4">200</text><text x="293.3" y="365.3" text-anchor="middle" font-size="10" fill="#cda010" stroke="#cda010" stroke-width=".25" letter-spacing=".4">250</text><text x="357.2" y="365.3" text-anchor="middle" font-size="10" fill="#cda010" stroke="#cda010" stroke-width=".25" letter-spacing=".4">300</text><text x="421.2" y="365.3" text-anchor="middle" font-size="10" fill="#cda010" stroke="#cda010" stroke-width=".25" letter-spacing=".4">350</text><text x="485.1" y="365.3" text-anchor="middle" font-size="10" fill="#cda010" stroke="#cda010" stroke-width=".25" letter-spacing=".4">400</text><text x="549.0" y="365.3" text-anchor="middle" font-size="10" fill="#cda010" stroke="#cda010" stroke-width=".25" letter-spacing=".4">450</text><text x="612.9" y="365.3" text-anchor="middle" font-size="10" fill="#cda010" stroke="#cda010" stroke-width=".25" letter-spacing=".4">500</text><text x="676.8" y="365.3" text-anchor="middle" font-size="10" fill="#cda010" stroke="#cda010" stroke-width=".25" letter-spacing=".4">550</text><text x="740.8" y="365.3" text-anchor="middle" font-size="10" fill="#cda010" stroke="#cda010" stroke-width=".25" letter-spacing=".4">600</text><text x="804.7" y="365.3" text-anchor="middle" font-size="10" fill="#cda010" stroke="#cda010" stroke-width=".25" letter-spacing=".4">650</text><text x="868.6" y="365.3" text-anchor="middle" font-size="10" fill="#cda010" stroke="#cda010" stroke-width=".25" letter-spacing=".4">700</text><text x="932.5" y="365.3" text-anchor="middle" font-size="10" fill="#cda010" stroke="#cda010" stroke-width=".25" letter-spacing=".4">750</text><text x="996.4" y="365.3" text-anchor="middle" font-size="10" fill="#cda010" stroke="#cda010" stroke-width=".25" letter-spacing=".4">800</text><text x="1060.4" y="365.3" text-anchor="middle" font-size="10" fill="#cda010" stroke="#cda010" stroke-width=".25" letter-spacing=".4">850</text><text x="1124.3" y="365.3" text-anchor="middle" font-size="10" fill="#cda010" stroke="#cda010" stroke-width=".25" letter-spacing=".4">900</text><text x="1188.2" y="365.3" text-anchor="middle" font-size="10" fill="#cda010" stroke="#cda010" stroke-width=".25" letter-spacing=".4">950</text></svg>
<div style="left:1245px;top:33px;width:31px;height:372px;background:#212121"></div>
<div class="ar" style="left:1246.8px;top:37.5px;width:27px;height:23.5px"><svg width="26" height="23" style="left:0;top:0"><polygon points="12.5,5.7 6.8,15.9 18.2,15.9" fill="#fff"/></svg></div>
<div style="left:1250px;top:62px;width:23px;height:22px;background:#2f2f2f"></div>
<svg style="left:1250px;top:62px" width="23" height="22"><path d="M1.5 2.5H19.5M1.5 5H19.5M1.5 7.6H19.5M1.5 12H19.5" stroke="#f2c200" stroke-width="1.15"/><path d="M1.5 19.4H19.5" stroke="#a88600" stroke-width="1.3"/></svg>
<div class="tk" style="left:1250px;top:84px;width:23px;height:265px"></div>
<div class="hd" style="left:1250px;top:111px;width:23.5px"></div>
<div style="left:1250px;top:156px;width:23px;height:22.5px;background:#2c2c2c"></div>
<svg style="left:1250px;top:156px" width="23" height="23"><circle cx="12" cy="11.3" r="6.1" fill="none" stroke="#f2c200" stroke-width="1.9"/><path d="M12 2.3V5M12 17.6V20.4M3 11.3H5.6M18.4 11.3H21M5.8 5.1L7.6 6.9M16.4 15.7L18.2 17.5M5.8 17.5L7.6 15.7M16.4 6.9L18.2 5.1" stroke="#f2c200" stroke-width="1.3"/></svg>
<div class="hd" style="left:1250px;top:203.5px;width:23.5px"></div>
<div style="left:1250px;top:251px;width:23px;height:22.5px;background:#2c2c2c"></div>
<svg style="left:1250px;top:251px" width="23" height="23"><circle cx="12" cy="11.5" r="7" fill="#1c1c1c" stroke="#f2c200" stroke-width="1.6"/><path d="M12 4.5A7 7 0 0 1 12 18.5Z" fill="#f2c200"/></svg>
<div class="hd" style="left:1250px;top:320px;width:23.5px"></div>
<div class="ar" style="left:1247px;top:349.5px;width:27px;height:24px"><svg width="26" height="23.5" style="left:0;top:0"><polygon points="12.5,16.95 6.8,6.75 18.2,6.75" fill="#fff"/></svg></div>
<div style="left:221px;top:375.3px;width:1024px;height:29px;background:linear-gradient(180deg,#202020 0,#2c2c2c 12px,#3d3d3d 24.6px,#535353 24.8px,#505050 26px,#2c2c2c 26.3px,#2c2c2c 29px)"></div>
<div class="ar" style="left:222px;top:377px;width:27px;height:23.2px"><svg width="26" height="22.7" style="left:0;top:0"><polygon points="7.5,11.05 16.5,5.05 16.5,17.05" fill="#fff"/></svg></div>
<div class="b tbb" style="left:253px;top:377px;width:47.5px;height:23.2px"><i class="on"></i><span>Spect</span></div>
<div class="b tbb" style="left:303px;top:377px;width:47.5px;height:23.2px"><i></i><span>WFall</span></div>
<div class="b tbb" style="left:353px;top:377px;width:47.5px;height:23.2px"><i></i><span>Zoom</span></div>
<div class="b nl dim tbb" style="left:403px;top:377px;width:47.5px;height:23.2px"><span>Palette</span></div>
<div class="b tbb" style="left:463.5px;top:377px;width:47.5px;height:23.2px"><i class="on"></i><span>Labels</span></div>
<div class="b tbb" style="left:513px;top:377px;width:47.5px;height:23.2px"><i></i><span>PeakSrc</span></div>
<div class="b tbb" style="left:569px;top:377px;width:47.5px;height:23.2px"><i class="on"></i><span>NBW</span></div>
<div class="b tbb" style="left:619.5px;top:377px;width:47.5px;height:23.2px"><i></i><span>NBN</span></div>
<div class="b tbb" style="left:669px;top:377px;width:47.5px;height:23.2px"><i></i><span>NBV</span></div>
<div class="b dim tbb" style="left:725px;top:377px;width:47.5px;height:23.2px"><i></i><span>Afc</span></div>
<div class="b tbb" style="left:781px;top:377px;width:47.5px;height:23.2px"><i></i><span>MkrLog</span></div>
<div class="b tbb" style="left:838px;top:377px;width:47.5px;height:23.2px"><i></i><span>Pause</span></div>
<div class="b tbb" style="left:888px;top:377px;width:47.5px;height:23.2px"><i></i><span>MHold</span></div>
<div class="b nl tbb" style="left:938.5px;top:377px;width:47.5px;height:23.2px"><span>Clear</span></div>
<div class="b tbb" style="left:1001.5px;top:377px;width:47.5px;height:23.2px"><i></i><span>Fn</span></div>
<div class="b tbb" style="left:1164.5px;top:377px;width:47.5px;height:23.2px"><i class="on"></i><span>FFT</span></div>
<div class="ar" style="left:1215.5px;top:377px;width:27px;height:23.2px"><svg width="26" height="22.7" style="left:0;top:0"><polygon points="17.5,11.05 8.5,5.05 8.5,17.05" fill="#fff"/></svg></div>
<div style="left:220px;top:404.3px;width:1056px;height:45.7px;background:linear-gradient(180deg,#0c0c0c 0,#0c0c0c 1.6px,#1c1c1c 1.7px)"></div>
<div style="left:222px;top:406px;width:1052px;height:42.5px;background:#5f5c46;box-shadow:inset 2px 2px 0 #3a3929"></div>
<div class="mb" style="left:226.9px;top:415.3px"><i class="on"></i><span>AM</span></div>
<div class="mb" style="left:289.45px;top:415.3px"><i></i><span>SAM</span></div>
<div class="mb" style="left:352px;top:415.3px"><i></i><span>CW</span></div>
<div class="mb" style="left:414.55px;top:415.3px"><i></i><span>RTTY</span></div>
<div class="mb" style="left:477.1px;top:415.3px"><i></i><span>LSB</span></div>
<div class="mb" style="left:539.65px;top:415.3px"><i></i><span>USB</span></div>
<div class="mb" style="left:602.2px;top:415.3px"><i></i><span>FM</span></div>
<div class="mb" style="left:664.75px;top:415.3px"><i></i><span>DRM</span></div>
<div class="mb" style="left:727.3px;top:415.3px"><i></i><span>USER</span></div>
<div style="left:219.5px;top:459.5px;width:55px;height:206px;background:#1a1a1a;box-shadow:0 -2px 2px #0c0c0c,0 3px 0 #505050"></div>
<div class="h" style="left:148px;top:464.5px;width:200px;text-align:center;">BW</div>
<div class="b" style="left:223px;top:482.5px;width:48px;height:24px"><i></i><span>50 kHz</span></div>
<div class="b" style="left:223px;top:508.8px;width:48px;height:24px"><i></i><span>25 kHz</span></div>
<div class="b" style="left:223px;top:535.1px;width:48px;height:24px"><i></i><span>12 kHz</span></div>
<div class="b" style="left:223px;top:561.4px;width:48px;height:24px"><i class="on"></i><span>6 kHz</span></div>
<div class="b" style="left:223px;top:587.7px;width:48px;height:24px"><i></i><span>3 kHz</span></div>
<div class="b" style="left:223px;top:614px;width:48px;height:24px"><i></i><span>1.6kHz</span></div>
<div class="b" style="left:223px;top:640.3px;width:48px;height:24px"><i></i><span>0.8kHz</span></div>
<div style="left:275px;top:459.5px;width:255px;height:214.5px;background:linear-gradient(180deg,#1a1a1a 0,#1a1a1a 211.5px,#050505 211.6px,#050505 100%)"></div>
<svg style="left:0;top:440px" width="560" height="240" viewBox="0 440 560 240" font-family="DejaVu Sans Condensed,DejaVu Sans,Liberation Sans,sans-serif"><rect x="275" y="459.5" width="255" height="186.1" fill="#000"/><rect x="275.3" y="459.5" width="246.5" height="184.5" fill="#46442f"/><path d="M275.3 460.6H521.8M275.3 471.4H521.8M275.3 483.7H521.8M275.3 495.9H521.8M275.3 508.2H521.8M275.3 520.4H521.8M275.3 532.7H521.8M275.3 545.0H521.8M275.3 557.2H521.8M275.3 569.5H521.8M275.3 581.7H521.8M275.3 594.0H521.8M275.3 606.3H521.8M275.3 618.5H521.8M275.3 630.8H521.8M275.3 643.0H521.8M276.0 459.5V644M322.1 459.5V644M403.5 459.5V644M484.9 459.5V644M521.4 459.5V644" stroke="#757036" stroke-width="1" fill="none"/><polyline points="275.3,603.3 276.3,606.4 277.4,605.3 278.4,606.6 279.5,606.5 280.5,610.0 281.6,613.0 282.7,614.3 283.7,617.0 284.8,609.4 285.8,610.6 286.9,604.4 287.9,608.9 289.0,610.0 290.0,612.8 291.1,606.1 292.1,599.1 293.2,612.8 294.3,610.7 295.3,603.5 296.4,603.3 297.4,601.8 298.5,597.0 299.5,598.5 300.6,600.4 301.6,606.5 302.7,601.2 303.7,599.1 304.8,604.5 305.9,604.8 306.9,610.7 308.0,598.8 309.0,585.4 310.1,594.9 311.1,598.0 312.2,599.1 313.2,599.4 314.3,601.2 315.3,597.9 316.4,596.1 317.5,591.7 318.5,589.3 319.6,583.3 320.6,589.3 321.7,593.8 323.0,598.0 324.4,600.2 325.7,595.7 327.0,597.0 328.0,599.3 329.1,606.5 330.1,592.8 331.8,622.3 333.3,588.6 334.3,591.8 335.4,600.0 336.4,603.3 337.5,592.7 338.6,583.3 339.6,582.3 340.7,577.2 341.7,579.1 343.0,578.2 344.2,583.3 345.5,575.9 347.0,598.0 348.4,587.9 349.7,579.1 350.8,577.1 351.8,572.7 353.3,593.8 354.7,582.3 356.1,569.6 357.3,574.5 358.6,577.0 359.9,575.0 361.1,575.9 362.5,581.8 363.9,587.5 365.3,577.0 366.5,573.5 367.7,570.6 368.6,581.6 369.6,592.8 370.9,584.9 372.3,582.2 373.6,588.1 374.8,588.6 376.0,584.9 377.2,585.4 378.2,576.8 379.3,565.3 380.3,574.1 381.4,577.0 382.3,581.8 383.3,589.6 384.4,579.5 385.6,569.6 386.9,577.0 388.1,580.1 389.5,589.6 390.9,592.8 392.1,586.1 393.4,580.1 394.4,578.9 395.5,578.8 396.6,581.2 397.6,581.6 398.7,575.9 399.7,588.7 400.8,603.3 402.0,528.4 403.3,524.2 404.6,528.4 405.6,581.2 406.9,579.1 408.2,575.9 409.2,576.1 410.3,581.2 411.3,580.6 412.4,582.8 413.4,579.1 414.5,589.0 415.5,601.2 416.6,592.1 417.6,581.2 418.7,577.4 419.8,576.1 420.8,569.6 422.2,578.6 423.6,586.4 424.6,578.3 425.7,572.9 426.7,564.3 428.0,572.7 429.2,581.2 430.3,579.3 431.4,580.6 432.4,585.4 433.5,583.6 434.5,581.5 435.6,580.1 437.1,591.7 438.7,569.6 440.0,571.4 441.3,575.9 443.0,588.6 444.0,580.6 445.1,574.8 446.1,573.8 447.2,573.6 448.2,574.8 449.3,572.9 450.3,566.4 451.7,575.5 453.1,587.5 454.3,580.3 455.6,571.7 456.7,579.8 457.7,583.3 459.4,603.3 460.5,587.4 461.5,573.8 463.0,583.3 464.1,584.1 465.1,580.5 466.2,577.0 467.2,581.3 468.3,580.1 470.0,597.0 471.4,589.2 472.9,584.3 474.0,588.2 475.0,593.8 476.4,600.5 477.8,608.6 479.0,600.1 480.3,588.6 481.7,597.1 483.0,604.4 484.2,596.2 485.4,588.7 486.6,581.2 488.0,585.4 489.4,592.8 490.6,593.9 491.9,601.2 493.3,593.2 494.6,590.7 495.7,588.7 496.7,582.2 497.8,589.0 498.9,597.0 499.9,603.1 501.0,601.6 502.0,606.5 503.1,600.7 504.1,598.1 505.2,593.8 506.6,591.2 507.9,592.8 509.2,598.8 510.5,606.5 511.5,608.5 512.6,604.4 513.6,601.2 514.7,592.8 515.7,601.1 516.8,607.5 517.8,601.1 518.9,593.8 520.2,601.9 521.4,604.4 523.1,608.6 524.6,643.4 525.6,614.9 527.3,599.1 528.6,603.7 529.9,602.3" fill="none" stroke="#f2f8f2" stroke-width="1.5" stroke-linejoin="round"/><text x="282.5" y="475.3" font-family="DejaVu Sans,Liberation Sans,sans-serif" font-size="13" fill="#ecca5c" stroke="#ecca5c" stroke-width=".15">6.01 kHz</text><path d="M281.4 646.2V649M322.1 646.2V652.8M362.8 646.2V649M403.5 646.2V652.8M444.2 646.2V649M484.9 646.2V652.8M525.6 646.2V649" stroke="#d29a14" stroke-width="1.3" fill="none"/><text x="320.6" y="662.6" text-anchor="middle" font-size="10" fill="#c79a10" letter-spacing=".3">-2000</text><text x="403.5" y="662.6" text-anchor="middle" font-size="10" fill="#c79a10" letter-spacing=".3">0</text><text x="484.9" y="662.6" text-anchor="middle" font-size="10" fill="#c79a10" letter-spacing=".3">2000</text></svg>
<div class="ar" style="left:274.5px;top:675.5px;width:26.5px;height:23.5px"><svg width="25.5" height="23" style="left:0;top:0"><polygon points="7.25,11.2 16.25,5.2 16.25,17.2" fill="#fff"/></svg></div>
<div class="b" style="left:303.5px;top:675.5px;width:47.5px;height:23.5px"><i class="on"></i><span>PBT</span></div>
<div class="b" style="left:352.5px;top:675.5px;width:47.5px;height:23.5px"><i></i><span>Notch</span></div>
<div class="b" style="left:403px;top:675.5px;width:47.5px;height:23.5px"><i></i><span>ANotch</span></div>
<div class="b" style="left:452.5px;top:675.5px;width:47.5px;height:23.5px"><i></i><span>CWPeak</span></div>
<div class="ar" style="left:503px;top:675.5px;width:26.5px;height:23.5px"><svg width="25.5" height="23" style="left:0;top:0"><polygon points="17.25,11.2 8.25,5.2 8.25,17.2" fill="#fff"/></svg></div>
<div class="pd" style="left:537px;top:459px;width:82px;height:241px"></div>
<div class="h" style="left:477.5px;top:464px;width:200px;text-align:center;">AVG</div>
<div class="h" style="left:458px;top:482px;width:200px;text-align:center;">Main</div>
<div class="h" style="left:496.5px;top:482px;width:200px;text-align:center;">Sec</div>
<div class="tg" style="left:545.2px;top:495px"><i class="on"></i></div>
<div class="tg" style="left:583px;top:495px"><i></i></div>
<div class="tk" style="left:546.7px;top:522px;width:24px;height:175px"></div>
<div class="tk" style="left:584.2px;top:522px;width:24px;height:175px"></div>
<div class="hd" style="left:547px;top:668.8px;width:23.7px"></div>
<div class="hd" style="left:584.7px;top:668.8px;width:23.7px"></div>
<div class="pd" style="left:625.5px;top:459px;width:42.5px;height:241px"></div>
<div class="h" style="left:546.5px;top:464px;width:200px;text-align:center;">NB</div>
<div class="h" style="left:547px;top:482px;width:200px;text-align:center;">Lev</div>
<div class="tg" style="left:632.7px;top:495px"><i></i></div>
<div class="tk" style="left:634px;top:522px;width:24px;height:175px"></div>
<div class="hd" style="left:634.3px;top:605px;width:24px"></div>
<div style="left:679px;top:457.5px;width:52.5px;height:77px;background:#1a1a1a;box-shadow:0 -1px 1px #0c0c0c,1px 1px 0 #4a4a4a"></div>
<div class="h" style="left:604.5px;top:464px;width:200px;text-align:center;">MKR</div>
<div class="b nl" style="left:680.7px;top:482.5px;width:48px;height:23.5px"><span>Clr</span></div>
<div class="b" style="left:680.7px;top:509.8px;width:48px;height:24px"><i></i><span>Delta</span></div>
<div style="left:679px;top:539px;width:52.5px;height:160px;background:#1a1a1a;box-shadow:0 -1px 1px #0c0c0c,1px 1px 0 #4a4a4a"></div>
<div class="h" style="left:605px;top:544px;width:200px;text-align:center;">AGC</div>
<div class="b" style="left:680.7px;top:563.8px;width:48px;height:23.5px"><i></i><span>SpkRej</span></div>
<div class="b" style="left:680.7px;top:591.2px;width:48px;height:23.5px"><i></i><span>Fast</span></div>
<div class="b" style="left:680.7px;top:618.6px;width:48px;height:23.5px"><i class="on"></i><span>Med</span></div>
<div class="b" style="left:680.7px;top:646px;width:48px;height:23.5px"><i></i><span>Slow</span></div>
<div class="b" style="left:680.7px;top:673.4px;width:48px;height:23.5px"><i></i><span>Off</span></div>
<div style="left:744.5px;top:458px;width:386px;height:84.5px;background:#d5bf7b;box-shadow:inset 0 0 0 1.5px #8f7f45, inset 0 0 3px 1px #a99555"></div>
<svg style="left:740px;top:455px" width="400" height="92" viewBox="740 455 400 92" font-family="DejaVu Sans,Liberation Sans,sans-serif" font-size="11" fill="#2a2417" stroke="#2a2417" stroke-width=".25"><text x="758.5" y="476" letter-spacing=".8">Level (dBm):</text><text x="856" y="476" letter-spacing="1.4">-32.8</text><text x="785.5" y="491.3" text-anchor="middle" letter-spacing="1.5">-120</text><text x="840.5" y="491.3" text-anchor="middle" letter-spacing="1.5">-100</text><text x="895.5" y="491.3" text-anchor="middle" letter-spacing="1.5">-80</text><text x="950.5" y="491.3" text-anchor="middle" letter-spacing="1.5">-60</text><text x="1005.5" y="491.3" text-anchor="middle" letter-spacing="1.5">-40</text><text x="1060.5" y="491.3" text-anchor="middle" letter-spacing="1.5">-20</text><text x="1115.5" y="491.3" text-anchor="middle" letter-spacing="1.5">0</text><path d="M758.2 498.0V504.5M772.0 499.8V504.5M785.7 493.0V504.5M799.5 499.8V504.5M813.2 497.3V504.5M827.0 499.8V504.5M840.7 493.0V504.5M854.5 499.8V504.5M868.2 497.3V504.5M882.0 499.8V504.5M895.7 493.0V504.5M909.5 499.8V504.5M923.2 497.3V504.5M937.0 499.8V504.5M950.7 493.0V504.5M964.5 499.8V504.5M978.2 497.3V504.5M992.0 499.8V504.5M1005.7 493.0V504.5M1019.5 499.8V504.5M1033.2 497.3V504.5M1047.0 499.8V504.5M1060.7 493.0V504.5M1074.5 499.8V504.5M1088.2 497.3V504.5M1102.0 499.8V504.5M1115.7 493.0V504.5" stroke="#1b170c" stroke-width="1.3" fill="none"/><rect x="758.2" y="504.3" width="357.6" height="14.6" fill="none" stroke="#1b170c" stroke-width="1.4"/><rect x="760.3" y="506.4" width="153.6" height="10.6" fill="#4c8200"/><rect x="913.9" y="506.4" width="110.2" height="10.6" fill="#9a2a00"/><text x="783.0" y="535" text-anchor="middle">1</text><text x="799.5" y="535" text-anchor="middle">2</text><text x="816.0" y="535" text-anchor="middle">3</text><text x="832.5" y="535" text-anchor="middle">4</text><text x="849.0" y="535" text-anchor="middle">5</text><text x="865.5" y="535" text-anchor="middle">6</text><text x="882.0" y="535" text-anchor="middle">7</text><text x="898.5" y="535" text-anchor="middle">8</text><text x="915.0" y="535" text-anchor="middle">9</text><text x="941.7" y="535" text-anchor="middle" letter-spacing="1">+10</text><text x="969.2" y="535" text-anchor="middle" letter-spacing="1">+20</text><text x="996.7" y="535" text-anchor="middle" letter-spacing="1">+30</text><text x="1024.2" y="535" text-anchor="middle" letter-spacing="1">+40</text><text x="1051.7" y="535" text-anchor="middle" letter-spacing="1">+50</text><text x="1079.2" y="535" text-anchor="middle" letter-spacing="1">+60</text><text x="1106.2" y="535" text-anchor="middle" letter-spacing="1">+70</text><text x="762.5" y="535" text-anchor="middle">S</text><path d="M783.0 519V522M799.5 519V522M816.0 519V522M832.5 519V522M849.0 519V522M865.5 519V522M882.0 519V522M898.5 519V522M915.0 519V522M942.5 519V522M970.0 519V522M997.5 519V522M1025.0 519V522M1052.5 519V522M1080.0 519V522M1106.0 519V522" stroke="#1b170c" stroke-width="1.3" fill="none"/></svg>
<div style="left:1131px;top:457.5px;width:53px;height:85px;background:#1a1a1a;box-shadow:0 -1px 1px #0c0c0c,1px 1px 0 #4a4a4a"></div>
<div class="h" style="left:1058px;top:464px;width:200px;text-align:center;">S-MTR</div>
<div class="b" style="left:1133.5px;top:489px;width:47.5px;height:23px"><i class="on"></i><span>Rms</span></div>
<div class="b" style="left:1133.5px;top:516px;width:47.5px;height:24px"><i></i><span>Peak</span></div>
<div style="left:744.5px;top:549.5px;width:438.5px;height:151px;background:#131313;box-shadow:0 -1px 1px #0a0a0a"></div>
<div style="left:744.5px;top:549.5px;width:438.5px;height:21.5px;background:#1c1c1c"></div>
<div class="h" style="left:749.5px;top:554.6px;font-size:13px">MEM</div>
<div style="left:749.5px;top:572px;font-size:14px;line-height:16px;color:#e8c450;white-space:nowrap;transform-origin:0 0;transform:scaleX(.948)">0930 1530 Myanma Radio &nbsp;- MYA (BR)</div>
<div style="left:744.5px;top:672.5px;width:438.5px;height:28px;background:linear-gradient(180deg,#151515 0,#222 30%,#383838 80%,#454545 100%)"></div>
<div class="b" style="left:745.5px;top:675px;width:47.5px;height:23.5px"><i></i><span>HFCC</span></div>
<div class="b" style="left:797.2px;top:675px;width:47.5px;height:23.5px"><i class="on"></i><span>EIBI</span></div>
<div class="b" style="left:848.5px;top:675px;width:47.5px;height:23.5px"><i></i><span>User1</span></div>
<div class="b" style="left:899.5px;top:675px;width:47.5px;height:23.5px"><i></i><span>User2</span></div>
<div class="b" style="left:951px;top:675px;width:47.5px;height:23.5px"><i></i><span>ALL</span></div>
<div class="b" style="left:1133.5px;top:675px;width:47.5px;height:23.5px"><i></i><span>Bank</span></div>
<div class="pd" style="left:1190px;top:459px;width:83.5px;height:240px"></div>
<div class="h" style="left:1132.5px;top:464px;width:200px;text-align:center;">AF</div>
<div class="h" style="left:1112.5px;top:482px;width:200px;text-align:center;">NR</div>
<div class="h" style="left:1153px;top:482px;width:200px;text-align:center;">Vol</div>
<div class="tg" style="left:1199px;top:495px"><i></i></div>
<div class="tg" style="left:1239.2px;top:495px"><i class="on"></i></div>
<div class="tk" style="left:1200.3px;top:522px;width:24px;height:175px"></div>
<div class="tk" style="left:1240.7px;top:522px;width:24px;height:175px"></div>
<div class="hd" style="left:1201px;top:630.7px;width:23.5px"></div>
<div class="hd" style="left:1241px;top:680px;width:23.7px"></div>
</div></body></html>
